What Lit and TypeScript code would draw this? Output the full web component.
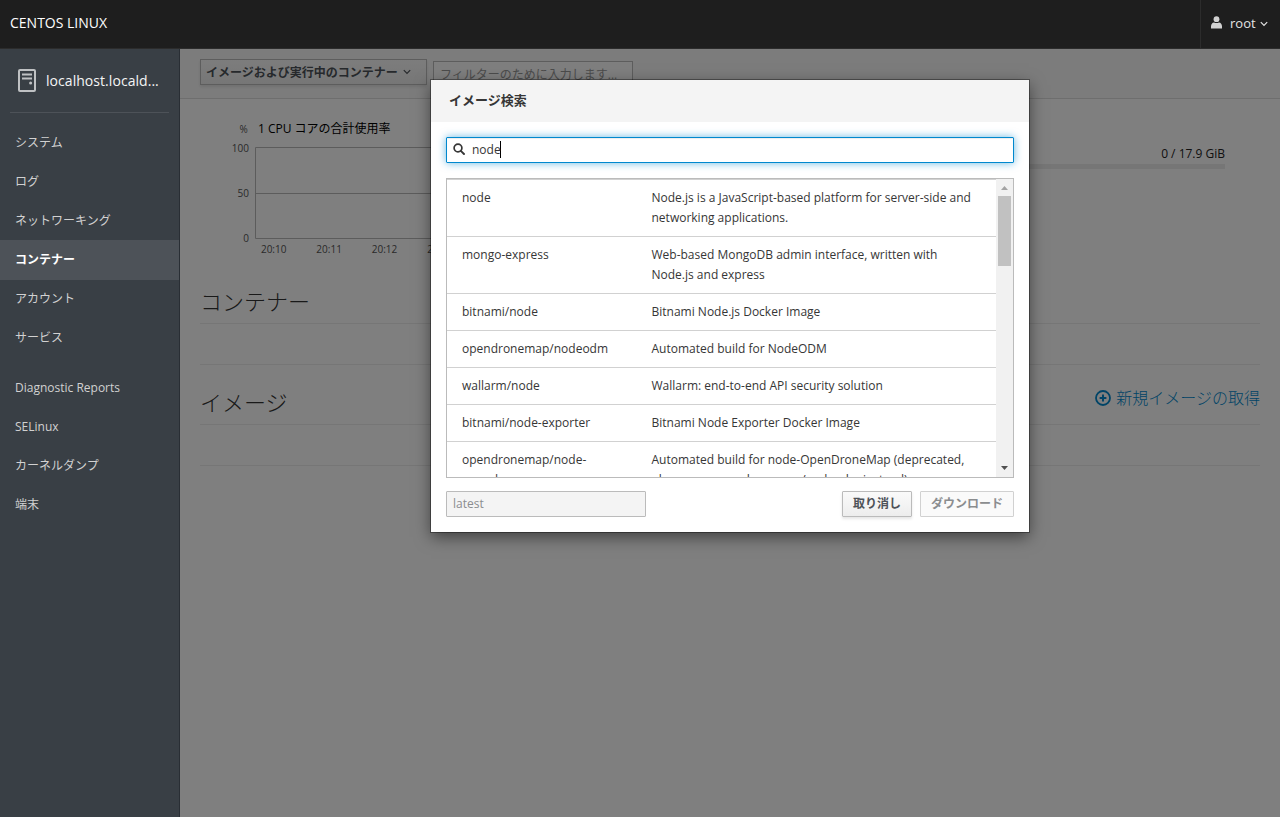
import { LitElement, html, css, svg } from "lit";
import { customElement } from "lit/decorators.js";

const NAV_MAIN = ["システム", "ログ", "ネットワーキング", "コンテナー", "アカウント", "サービス"];
const NAV_TOOLS = ["Diagnostic Reports", "SELinux", "カーネルダンプ", "端末"];
const ACTIVE = "コンテナー";

const IMAGES: [string, string][] = [
  ["node", "Node.js is a JavaScript-based platform for server-side and networking applications."],
  ["mongo-express", "Web-based MongoDB admin interface, written with Node.js and express"],
  ["bitnami/node", "Bitnami Node.js Docker Image"],
  ["opendronemap/nodeodm", "Automated build for NodeODM"],
  ["wallarm/node", "Wallarm: end-to-end API security solution"],
  ["bitnami/node-exporter", "Bitnami Node Exporter Docker Image"],
  ["opendronemap/node-opendronemap", "Automated build for node-OpenDroneMap (deprecated, please use opendronemap/nodeodm instead)"],
];

const chevron = html`<svg class="chev" width="8" height="6" viewBox="0 0 8 6"><path d="M0.8 1.2 L4 4.4 L7.2 1.2" fill="none" stroke="currentColor" stroke-width="1.2"/></svg>`;

@customElement("image-search-dialog")
export class ImageSearchDialog extends LitElement {
  static styles = css`
    :host { display: block; box-sizing: border-box; width: 598px; height: 452px; background: #fff; color: #363636;
      box-shadow: 0 0 0 1px rgba(0,0,0,.35), 0 5px 15px rgba(0,0,0,.5); }
    .head { height: 42px; box-sizing: border-box; padding: 10px 18px; background: #f4f4f4; font-size: 13px; line-height: 21px; font-weight: 600; }
    .body { display: flex; flex-direction: column; padding: 15px 15px 0; }
    .search { display: flex; align-items: center; box-sizing: border-box; height: 26px; border: 1px solid #0088ce; padding: 0 6px 2px;
      box-shadow: inset 0 1px 1px rgba(0,0,0,.075), 0 0 8px rgba(0,136,206,.6); font-size: 12px; border-radius: 1px; }
    .query { margin-left: 7px; line-height: 17px; width: 28px; white-space: nowrap; border-right: 1px solid #000; }
    .results { display: flex; box-sizing: border-box; height: 300px; margin-top: 15px; border: 1px solid #bbb; overflow: hidden; }
    .rows { flex: 1; min-width: 0; font-size: 12px; line-height: 20px; }
    .row { display: grid; grid-template-columns: 174.5px 1fr; column-gap: 15px; padding: 8px 15px; border-top: 1px solid #d1d1d1; }
    .bar { display: flex; flex-direction: column; align-items: center; justify-content: space-between; width: 17px; background: #f1f1f1; }
    .bar svg { display: block; flex: none; }
    .thumb { width: 13px; height: 70px; background: #c1c1c1; }
    .space { flex: 1; }
    .foot { display: flex; margin-top: 13px; gap: 8px; font-size: 12px; line-height: 24px; }
    .tag { width: 200px; height: 26px; box-sizing: border-box; padding: 0 6px; border: 1px solid #bbb; background: #f4f4f4; color: #8b8d8f; margin-right: auto; border-radius: 1px; }
    .btn { height: 26px; box-sizing: border-box; border: 1px solid #bbb; text-align: center; font-weight: 600; color: #4d5258; border-radius: 1px; white-space: nowrap;
      background: linear-gradient(#fafafa, #ededed); box-shadow: 0 2px 3px rgba(3,3,3,.1); }
    .cancel { width: 70px; }
    .download { width: 94px; border-color: #d1d1d1; background: #fafafa; color: #8b8d8f; box-shadow: none; }
  `;

  render() {
    return html`
      <div class="head">イメージ検索</div>
      <div class="body">
        <div class="search">
          <svg width="12" height="12" viewBox="0 0 12 12"><circle cx="5" cy="5" r="3.9" fill="none" stroke="#363636" stroke-width="1.7"/><path d="M7.8 7.8 L11 11" stroke="#363636" stroke-width="1.9" stroke-linecap="round"/></svg>
          <span class="query">node</span>
        </div>
        <div class="results">
          <div class="rows">${IMAGES.map(([n, d]) => html`<div class="row"><span>${n}</span><span>${d}</span></div>`)}</div>
          <div class="bar">
            <svg width="17" height="17" viewBox="0 0 17 17"><path d="M5 11 L8.5 7 L12 11z" fill="#a3a3a3"/></svg>
            <div class="thumb"></div><div class="space"></div>
            <svg width="17" height="17" viewBox="0 0 17 17"><path d="M5 6 L8.5 10 L12 6z" fill="#505050"/></svg>
          </div>
        </div>
        <div class="foot">
          <div class="tag">latest</div>
          <div class="btn cancel">取り消し</div>
          <div class="btn download">ダウンロード</div>
        </div>
      </div>`;
  }
}

@customElement("app-root")
export class AppRoot extends LitElement {
  static styles = css`
    :host { display: flex; flex-direction: column; height: 817px; width: 1280px; overflow: hidden;
      font-family: "Open Sans", "Noto Sans CJK JP", sans-serif; font-size: 12px; }
    .top { display: flex; justify-content: space-between; height: 49px; box-sizing: border-box; background: #1e1e1e; border-bottom: 1px solid #2c2c2c; color: #fff; font-size: 13px; line-height: 46px; flex: none; }
    .brand { padding-left: 10px; font-size: 14px; }
    .user { display: flex; align-items: center; box-sizing: border-box; width: 80px; border-left: 1px solid #2c2c2c; padding-left: 10px; color: #e4e4e4; }
    .user span { margin: 0 4px 0 8px; line-height: 46px; height: 48px; }
    .user .person { margin-top: -3px; }
    .chev { flex: none; }
    .wrap { display: flex; flex: 1; min-height: 0; }
    .side { width: 180px; box-sizing: border-box; background: #393f45; border-right: 1px solid #292e34; color: #d1d1d1; flex: none; }
    .host { display: flex; align-items: center; height: 63px; margin: 0 10px 10px; padding-left: 8px; border-bottom: 1px solid #4d5258; color: #f5f5f5; font-size: 14px; }
    .host span { margin-left: 10px; font-weight: 500; letter-spacing: .05px; }
    .item { height: 39px; line-height: 40px; padding-left: 15px; white-space: nowrap; }
    .active { background: #4d5258; color: #fff; font-weight: 600; height: 40px; margin: 0 0 -1px; }
    .gap { height: 11px; }
    .main { position: relative; flex: 1; min-width: 0; background: #fff; }
    .tools { display: flex; box-sizing: border-box; height: 50px; padding: 10px 20px 0; gap: 6px; background: #f9f9f9; border-bottom: 1px solid #dcdcdc; }
    .select { display: flex; align-items: center; box-sizing: border-box; width: 227px; height: 26px; padding: 0 5px; border: 1px solid #bbb; color: #4d5258; font-weight: 600; white-space: nowrap;
      background: linear-gradient(#fafafa, #ededed); box-shadow: 0 2px 3px rgba(3,3,3,.1); gap: 5px; }
    .filter { box-sizing: border-box; width: 200px; height: 26px; line-height: 26px; margin-top: 2px; padding: 0 6px; border: 1px solid #bbb; background: #fff; color: #999; white-space: nowrap; }
    .graphs { display: flex; justify-content: space-between; height: 170px; box-sizing: border-box; padding: 10px 55px 0 20px; }
    .chart { font-size: 10px; fill: #545454; }
    .title { font-size: 12px; fill: #000; }
    .mem { width: 400px; padding-top: 36px; text-align: right; line-height: 18px; color: #222; }
    .track { height: 5px; margin-top: 1px; background: #ededed; }
    .sec { display: flex; justify-content: space-between; margin: 0 20px; border-bottom: 1px solid #ececec; height: 55px; box-sizing: border-box; color: #333; }
    .h { font-size: 22px; line-height: 30px; font-weight: 300; padding-top: 17px; }
    .sec2 { height: 60px; }
    .sec2 .h { padding-top: 22px; }
    .blank { height: 41px; box-sizing: border-box; margin: 0 20px; border-bottom: 1px solid #ececec; }
    .add { display: flex; align-items: center; gap: 5px; height: 24px; margin-top: 21px; font-size: 16px; font-weight: 300; color: #0088ce; line-height: 24px; }
    .veil { position: absolute; inset: 0; background: rgba(0,0,0,.5); }
    image-search-dialog { position: absolute; left: 251px; top: 31px; }
  `;

  private item(t: string) {
    return html`<div class="item ${t === ACTIVE ? "active" : ""}">${t}</div>`;
  }

  render() {
    return html`
      <div class="top">
        <div class="brand">CENTOS LINUX</div>
        <div class="user">
          <svg class="person" width="11" height="13" viewBox="0 0 11 13"><circle cx="5.5" cy="3.2" r="2.9" fill="#d1d1d1"/><path d="M0 12.5 V10 Q0.6 6.6 3 6.4 Q5.5 7.8 8 6.4 Q10.4 6.6 11 10 V12.5z" fill="#d1d1d1"/></svg>
          <span>root</span>${chevron}
        </div>
      </div>
      <div class="wrap">
        <div class="side">
          <div class="host">
            <svg width="18" height="23" viewBox="0 0 18 23"><rect x="1" y="1" width="16" height="21" rx="1" fill="none" stroke="#bfc1c3" stroke-width="2"/><path d="M4 5.5H14M4 9.5H14" stroke="#bfc1c3" stroke-width="2"/><circle cx="12.6" cy="14" r="1.5" fill="#bfc1c3"/></svg>
            <span>localhost.locald...</span>
          </div>
          ${NAV_MAIN.map((t) => this.item(t))}
          <div class="gap"></div>
          ${NAV_TOOLS.map((t) => this.item(t))}
        </div>
        <div class="main">
          <div class="tools">
            <div class="select">イメージおよび実行中のコンテナー${chevron}</div>
            <div class="filter">フィルターのために入力します...</div>
          </div>
          <div class="graphs">
            <svg class="chart" width="480" height="150" viewBox="200 109 480 150">
              <text x="239.5" y="133">%</text>
              <text class="title" x="258" y="133">1 CPU コアの合計使用率</text>
              <g text-anchor="end"><text x="249" y="152">100</text><text x="249" y="197">50</text><text x="249" y="242">0</text></g>
              <path d="M680 147.5H255.5V238.5H680M255.5 193.5H680" fill="none" stroke="#b8b8b8"/>
              <g text-anchor="middle">${[0, 1, 2, 3].map((i) => svg`<text x=${273.7 + i * 55.4} y="253">20:1${i}</text>`)}</g>
            </svg>
            <div class="mem">0 / 17.9 GiB<div class="track"></div></div>
          </div>
          <div class="sec"><div class="h">コンテナー</div></div>
          <div class="blank"></div>
          <div class="sec sec2"><div class="h">イメージ</div>
            <div class="add"><svg width="16" height="16" viewBox="0 0 16 16"><circle cx="8" cy="8" r="7" fill="none" stroke="currentColor" stroke-width="1.8"/><path d="M8 4.6V11.4M4.6 8H11.4" stroke="currentColor" stroke-width="2"/></svg>新規イメージの取得</div>
          </div>
          <div class="blank"></div>
          <div class="veil"></div>
          <image-search-dialog></image-search-dialog>
        </div>
      </div>`;
  }
}
